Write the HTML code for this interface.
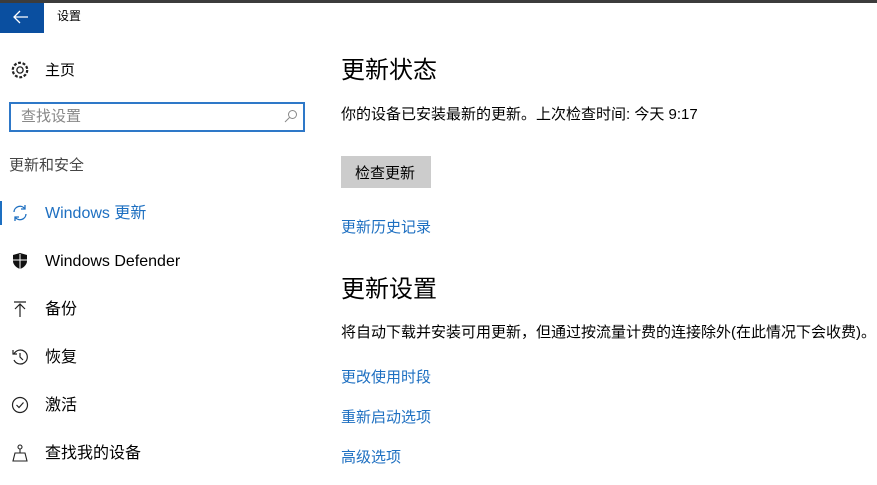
<!DOCTYPE html><html><head><meta charset="utf-8"><style>
body{margin:0;width:877px;height:485px;background:#fff;position:relative;overflow:hidden;font-family:"Liberation Sans","Noto Sans CJK SC",sans-serif;color:#000}
.a{position:absolute;white-space:nowrap;line-height:1}
.n{font-size:16px;left:45px}
.i{position:absolute;left:11px;width:18px;height:18px}
.l{color:#1d6fc1;font-size:15px;left:341px}
</style></head><body>
<div style="position:absolute;left:0;top:0;width:877px;height:3px;background:#3c3c3c"></div>
<div style="position:absolute;left:0;top:3px;width:44px;height:30px;background:#0a4fa0"></div>
<svg style="position:absolute;left:13px;top:10px" width="16" height="14"><path d="M1 7H15M7 1L1 7L7 13" stroke="#fff" stroke-width="1.3" fill="none"/></svg>
<div class="a" style="left:57px;top:10px;font-size:12px">设置</div>
<svg class="i" style="top:60px;left:10px;width:20px;height:20px" viewBox="0 0 18 18"><circle cx="9" cy="9" r="2.8" fill="none" stroke="#222" stroke-width="1.2"/><circle cx="9" cy="9" r="6.5" fill="none" stroke="#222" stroke-width="2" stroke-dasharray="2.6 1.5"/></svg>
<div class="a" style="left:45px;top:63px;font-size:15px">主页</div>
<div style="position:absolute;left:9px;top:102px;width:292px;height:26px;border:2px solid #2e78c8"></div>
<div class="a" style="left:21px;top:109px;font-size:15px;color:#888">查找设置</div>
<svg style="position:absolute;left:284px;top:109px" width="14" height="14"><circle cx="8.5" cy="5.5" r="4" fill="none" stroke="#888"/><path d="M5.5 8.5L1 13" stroke="#888"/></svg>
<div class="a" style="left:9px;top:158px;font-size:15px;color:#444">更新和安全</div>
<div style="position:absolute;left:0;top:201px;width:2px;height:24px;background:#1d6fc1"></div>
<svg class="i" style="top:204px" viewBox="0 0 18 18"><path d="M3 8A6 6 0 0 1 14 5M15 10A6 6 0 0 1 4 13" fill="none" stroke="#1d6fc1" stroke-width="1.3"/><path d="M14 1V5H10M4 17V13H8" fill="none" stroke="#1d6fc1" stroke-width="1.3"/></svg>
<div class="a n" style="top:206px;color:#1d6fc1">Windows 更新</div>
<svg class="i" style="top:252px" viewBox="0 0 18 18"><path d="M9 1L16 3V9C16 13 12 16 9 17C6 16 2 13 2 9V3Z" fill="#111"/><path d="M9 2V17M2 8H16" stroke="#fff" stroke-width="1"/></svg>
<div class="a n" style="top:254px">Windows Defender</div>
<svg class="i" style="top:300px" viewBox="0 0 18 18"><path d="M3 2H15M9 4V17M4 9L9 4L14 9" fill="none" stroke="#222" stroke-width="1.2"/></svg>
<div class="a n" style="top:302px">备份</div>
<svg class="i" style="top:348px" viewBox="0 0 18 18"><path d="M3 6A7 7 0 1 1 3 12" fill="none" stroke="#222" stroke-width="1.2"/><path d="M2 2V6H6M9 5V9L12 12" fill="none" stroke="#222" stroke-width="1.2"/></svg>
<div class="a n" style="top:350px">恢复</div>
<svg class="i" style="top:396px" viewBox="0 0 18 18"><circle cx="9" cy="9" r="7.5" fill="none" stroke="#222" stroke-width="1.2"/><path d="M5.5 9L8 11.5L12.5 6.5" fill="none" stroke="#222" stroke-width="1.2"/></svg>
<div class="a n" style="top:398px">激活</div>
<svg class="i" style="top:444px" viewBox="0 0 18 18"><circle cx="9" cy="3" r="2" fill="none" stroke="#222" stroke-width="1.1"/><path d="M9 5V9M4 9H14L16 17H2Z" fill="none" stroke="#222" stroke-width="1.1"/></svg>
<div class="a n" style="top:446px">查找我的设备</div>
<div class="a" style="left:341px;top:59px;font-size:24px">更新状态</div>
<div class="a" style="left:341px;top:107px;font-size:15px">你的设备已安装最新的更新。上次检查时间: 今天 9:17</div>
<div style="position:absolute;left:341px;top:156px;width:90px;height:32px;background:#cccccc"></div>
<div class="a" style="left:355px;top:166px;font-size:15px">检查更新</div>
<div class="a l" style="top:220px">更新历史记录</div>
<div class="a" style="left:341px;top:278px;font-size:24px">更新设置</div>
<div class="a" style="left:341px;top:325px;font-size:15px">将自动下载并安装可用更新，但通过按流量计费的连接除外(在此情况下会收费)。</div>
<div class="a l" style="top:370px">更改使用时段</div>
<div class="a l" style="top:410px">重新启动选项</div>
<div class="a l" style="top:450px">高级选项</div>
</body></html>
